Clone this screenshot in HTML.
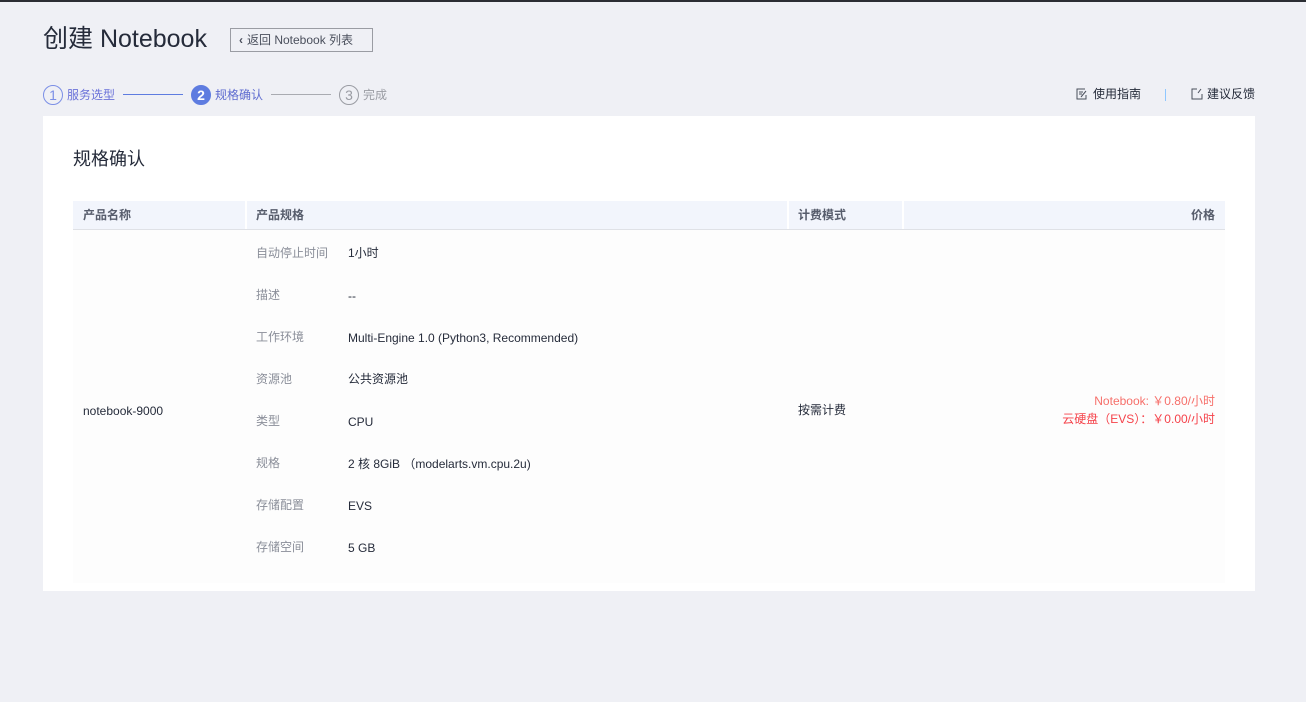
<!DOCTYPE html>
<html><head><meta charset="utf-8"><style>
*{margin:0;padding:0;box-sizing:border-box}
body{width:1306px;height:702px;background:#eff0f5;font-family:"Liberation Sans","Noto Sans CJK SC",sans-serif;color:#252b3a;position:relative;overflow:hidden;font-size:12px}
.a{position:absolute;white-space:nowrap;line-height:16px}
.topbar{position:absolute;left:0;top:0;width:1306px;height:2px;background:#2b2d33}
.card{position:absolute;left:43px;top:116px;width:1212px;height:475px;background:#fff}
.c{display:inline-block;width:20px;height:20px;border-radius:50%;text-align:center;line-height:18px;font-size:14px;position:absolute}
.lbl{color:#8a8e99}
</style></head><body>
<div class="topbar"></div>
<div class="a" style="left:43px;top:24px;font-size:25px;line-height:30px;color:#252b3a">创建 Notebook</div>
<div class="a" style="left:230px;top:28px;width:143px;height:24px;border:1px solid #9a9ca3;font-size:12px;line-height:22px;padding-left:8px;color:#4a4f5c"><span style="font-weight:bold;margin-right:4px">&lsaquo;</span>返回 Notebook 列表</div>

<div class="c" style="left:43px;top:85px;border:1px solid #7b8fe6;color:#7b8fe6;"><span>1</span></div>
<div class="a" style="left:67px;top:87px;color:#6a72d9;font-size:12px">服务选型</div>
<div class="a" style="left:123px;top:94px;width:60px;height:1px;background:#5e7ce0"></div>
<div class="c" style="left:191px;top:85px;background:#5e7ce0;color:#fff;border:1px solid #5e7ce0;font-weight:bold">2</div>
<div class="a" style="left:215px;top:87px;color:#5e6bd0">规格确认</div>
<div class="a" style="left:271px;top:94px;width:60px;height:1px;background:#a9abb1"></div>
<div class="c" style="left:339px;top:85px;border:1px solid #9a9ca3;color:#9a9ca3">3</div>
<div class="a" style="left:363px;top:87px;color:#9a9ca3">完成</div>

<svg class="a" style="left:1076px;top:88px" width="12" height="12" viewBox="0 0 12 12"><path d="M9 1H1v10h9V7" fill="none" stroke="#4a4f5c"/><path d="M3 4h4M3 6h3M5 9l5-6" stroke="#4a4f5c" fill="none"/></svg>
<div class="a" style="left:1093px;top:86px;color:#252b3a">使用指南</div>
<div class="a" style="left:1165px;top:89px;width:1px;height:12px;background:#8fc7ff"></div>
<svg class="a" style="left:1191px;top:88px" width="12" height="12" viewBox="0 0 12 12"><path d="M6 1H1v10h10V6" fill="none" stroke="#4a4f5c"/><path d="M10 1l-3 4" stroke="#4a4f5c"/></svg>
<div class="a" style="left:1207px;top:86px;color:#252b3a">建议反馈</div>

<div class="card"></div>
<div class="a" style="left:73px;top:147px;font-size:18px;line-height:24px;color:#252b3a">规格确认</div>
<div class="a" style="left:73px;top:201px;width:1152px;height:29px;background:#f2f5fc;border-bottom:1px solid #dfe1e6"></div>
<div class="a" style="left:73px;top:230px;width:1152px;height:353px;background:#fdfdfd"></div>
<div class="a" style="left:245px;top:201px;width:2px;height:28px;background:#fff"></div>
<div class="a" style="left:787px;top:201px;width:2px;height:28px;background:#fff"></div>
<div class="a" style="left:902px;top:201px;width:2px;height:28px;background:#fff"></div>
<div class="a" style="left:83px;top:207px;font-weight:bold;color:#575d6c">产品名称</div>
<div class="a" style="left:256px;top:207px;font-weight:bold;color:#575d6c">产品规格</div>
<div class="a" style="left:798px;top:207px;font-weight:bold;color:#575d6c">计费模式</div>
<div class="a" style="right:91px;top:207px;font-weight:bold;color:#575d6c">价格</div>

<div class="a lbl" style="left:256px;top:245px">自动停止时间</div><div class="a" style="left:348px;top:245px">1小时</div>
<div class="a lbl" style="left:256px;top:287px">描述</div><div class="a" style="left:348px;top:288px">--</div>
<div class="a lbl" style="left:256px;top:329px">工作环境</div><div class="a" style="left:348px;top:330px">Multi-Engine 1.0 (Python3, Recommended)</div>
<div class="a lbl" style="left:256px;top:371px">资源池</div><div class="a" style="left:348px;top:371px">公共资源池</div>
<div class="a lbl" style="left:256px;top:413px">类型</div><div class="a" style="left:348px;top:414px">CPU</div>
<div class="a lbl" style="left:256px;top:455px">规格</div><div class="a" style="left:348px;top:456px">2 核 8GiB （modelarts.vm.cpu.2u)</div>
<div class="a lbl" style="left:256px;top:497px">存储配置</div><div class="a" style="left:348px;top:498px">EVS</div>
<div class="a lbl" style="left:256px;top:539px">存储空间</div><div class="a" style="left:348px;top:540px">5 GB</div>

<div class="a" style="left:83px;top:403px">notebook-9000</div>
<div class="a" style="left:798px;top:402px">按需计费</div>
<div class="a" style="right:91px;top:393px;color:#f66f6a;text-align:right">Notebook: ￥0.80/小时</div>
<div class="a" style="right:91px;top:411px;color:#f5424a;text-align:right">云硬盘（EVS）：￥0.00/小时</div>
</body></html>
